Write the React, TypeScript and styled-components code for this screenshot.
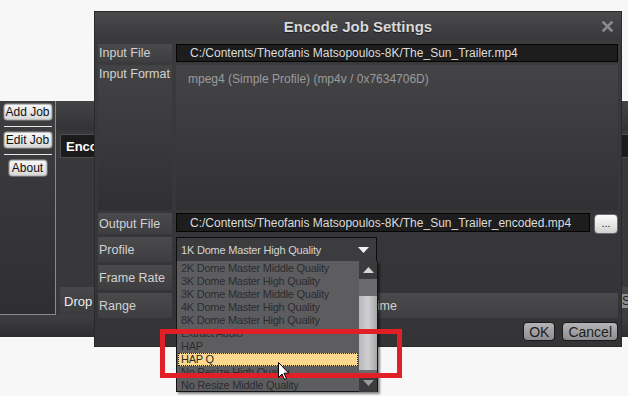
import React from 'react';
import styled, { createGlobalStyle } from 'styled-components';

const GlobalStyle = createGlobalStyle`
  html, body {
    margin: 0;
    padding: 0;
    background: #f7f7f7;
  }
  body {
    font-family: "Liberation Sans", Arial, sans-serif;
    font-size: 12px;
  }
`;

const profiles = [
  '2K Dome Master Middle Quality',
  '3K Dome Master High Quality',
  '3K Dome Master Middle Quality',
  '4K Dome Master High Quality',
  '8K Dome Master High Quality',
  'Extract Audio',
  'HAP',
  'HAP Q',
  'No Resize High Quality',
  'No Resize Middle Quality',
];

const App: React.FC = () => {
  return (
    <Stage>
      <GlobalStyle />

      <MainWindow>
        <Sidebar>
          <SideButton>Add Job</SideButton>
          <SideRule />
          <SideButton>Edit Job</SideButton>
          <SideRule />
          <SideButton $narrow>About</SideButton>
        </Sidebar>
        <Content>
          <HeaderStrip />
          <JobHeader>Encode Job</JobHeader>
          <Spacer />
          <DropRow>
            <span>Drop some files</span>
            <StartButton>S</StartButton>
          </DropRow>
        </Content>
        <BottomBar />
      </MainWindow>

      <Dialog>
        <TitleBar>
          <span />
          <Title>Encode Job Settings</Title>
          <CloseIcon viewBox='0 0 12 12'>
            <path d='M1.5 1.5 L10.5 10.5 M10.5 1.5 L1.5 10.5' />
          </CloseIcon>
        </TitleBar>

        <Form>
          <Label>Input File</Label>
          <Field>C:/Contents/Theofanis Matsopoulos-8K/The_Sun_Trailer.mp4</Field>

          <Label $tall>Input Format</Label>
          <InfoPanel>mpeg4 (Simple Profile) (mp4v / 0x7634706D)</InfoPanel>

          <Label>Output File</Label>
          <FieldRow>
            <Field>C:/Contents/Theofanis Matsopoulos-8K/The_Sun_Trailer_encoded.mp4</Field>
            <BrowseButton>...</BrowseButton>
          </FieldRow>

          <Label>Profile</Label>
          <ComboCell>
            <Combo>
              <span>1K Dome Master High Quality</span>
              <ComboArrow viewBox='0 0 11 6'>
                <path d='M0 0 H11 L5.5 6 Z' />
              </ComboArrow>
            </Combo>
            <DropList>
              <Items>
                {profiles.map((p) => (
                  <Item key={p} $active={p === 'HAP Q'}>
                    {p}
                  </Item>
                ))}
              </Items>
              <ScrollBar>
                <ScrollArrow>
                  <svg width='11' height='6' viewBox='0 0 11 6'>
                    <path d='M0 6 H11 L5.5 0 Z' fill='#d6d6d6' />
                  </svg>
                </ScrollArrow>
                <ScrollTrack>
                  <ScrollThumb />
                </ScrollTrack>
                <ScrollArrow>
                  <svg width='11' height='6' viewBox='0 0 11 6'>
                    <path d='M0 0 H11 L5.5 6 Z' fill='#9a9a9a' />
                  </svg>
                </ScrollArrow>
              </ScrollBar>
            </DropList>
          </ComboCell>

          <Label>Frame Rate</Label>
          <span />

          <Label>Range</Label>
          <RangePanel>Whole Video - Start Time to End Time</RangePanel>
        </Form>

        <Actions>
          <DialogButton>OK</DialogButton>
          <DialogButton>Cancel</DialogButton>
        </Actions>
      </Dialog>

      <Highlight />
      <Pointer viewBox='0 0 12 19'>
        <path d='M0.5 0.5 L0.5 15.5 L4 12 L6.5 17.5 L8.5 16.6 L6 11.2 L10.8 11.2 Z' />
      </Pointer>
    </Stage>
  );
};

export default App;

const Stage = styled.div`
  position: relative;
  width: 628px;
  height: 396px;
  overflow: hidden;
  background: #f7f7f7;
`;

/* background main window */

const MainWindow = styled.div`
  position: absolute;
  left: 0;
  top: 101px;
  width: 664px;
  height: 236px;
  display: grid;
  grid-template-columns: 56px 1fr;
  grid-template-rows: 1fr 22px;
  background: #38383a;
`;

const Sidebar = styled.div`
  display: flex;
  flex-direction: column;
  align-items: center;
  padding-top: 2px;
  background: linear-gradient(#3e3e41, #2f2f31);
  border-right: 1px solid #8a8a8c;
  border-bottom: 1px solid #8a8a8c;
`;

const SideButton = styled.div<{ $narrow?: boolean }>`
  box-sizing: border-box;
  width: ${({ $narrow }) => ($narrow ? '40px' : '50px')};
  height: 18px;
  display: flex;
  align-items: center;
  justify-content: center;
  font-size: 12px;
  color: #111;
  background: linear-gradient(#fafafa, #d6d6d6);
  border: 1px solid #6a6a6a;
  border-radius: 4px;
  box-shadow: inset 0 0 0 1px #bdbdbd;
`;

const SideRule = styled.div`
  width: 48px;
  height: 1px;
  margin: 5px 0 4px;
  background: #e6e6e6;
`;

const Content = styled.div`
  display: flex;
  flex-direction: column;
`;

const HeaderStrip = styled.div`
  height: 29px;
  background: linear-gradient(#444447, #333335);
`;

const JobHeader = styled.div`
  box-sizing: border-box;
  height: 24px;
  margin: 4px 0 0 4px;
  padding-left: 5px;
  display: flex;
  align-items: center;
  background: #1b1b1b;
  border: 1px solid #4e4e50;
  color: #fff;
  font-weight: bold;
  font-size: 13px;
`;

const Spacer = styled.div`
  flex: 1;
`;

const DropRow = styled.div`
  height: 28px;
  margin-left: 4px;
  padding-left: 4px;
  display: flex;
  align-items: center;
  justify-content: space-between;
  background: linear-gradient(#48484b, #3c3c3f);
  color: #eee;
  font-size: 13px;
`;

const StartButton = styled.div`
  margin-right: 30px;
  padding: 0 4px;
  height: 14px;
  line-height: 14px;
  font-size: 12px;
  color: #222;
  background: #8e8e90;
`;

const BottomBar = styled.div`
  grid-column: 1 / -1;
  background: linear-gradient(#3f3f42, #2d2d2f);
`;

/* dialog */

const Dialog = styled.div`
  position: absolute;
  left: 95px;
  top: 12px;
  width: 526px;
  height: 334px;
  display: flex;
  flex-direction: column;
  background: linear-gradient(#3b3b3d, #343436);
  box-shadow: 0 0 0 1px #2a2a2c;
`;

const TitleBar = styled.div`
  height: 28px;
  display: grid;
  grid-template-columns: 28px 1fr 28px;
  align-items: center;
  justify-items: center;
  background: linear-gradient(#4a4a4d, #38383a);
`;

const Title = styled.div`
  font-weight: bold;
  font-size: 15px;
  color: #d8d8d8;
  text-shadow: 0 1px 1px #1e1e1e;
`;

const CloseIcon = styled.svg`
  width: 13px;
  height: 13px;
  fill: none;
  stroke: #8a8a8c;
  stroke-width: 2.6;
`;

const Form = styled.div`
  display: grid;
  grid-template-columns: 74px 1fr;
  grid-template-rows: 18px 145px 21px 25px 25px 25px;
  column-gap: 4px;
  row-gap: 3px;
  padding: 4px 3px 0 3px;
`;

const Label = styled.div<{ $tall?: boolean }>`
  display: flex;
  align-items: ${({ $tall }) => ($tall ? 'flex-start' : 'center')};
  padding: ${({ $tall }) => ($tall ? '2px 0 0 1px' : '0 0 0 1px')};
  color: #d2d2d2;
  font-size: 12.5px;
  white-space: nowrap;
  overflow: hidden;
  background: ${({ $tall }) =>
    $tall ? 'linear-gradient(#434346, #303032)' : 'linear-gradient(#4a4a4d, #3e3e41)'};
`;

const Field = styled.div`
  flex: 1;
  box-sizing: border-box;
  display: flex;
  align-items: center;
  padding-left: 13px;
  background: #1d1d1e;
  border: 1px solid #050505;
  color: #dcdcdc;
  font-size: 12px;
  white-space: nowrap;
  overflow: hidden;
`;

const FieldRow = styled.div`
  display: flex;
  gap: 4px;
  padding-bottom: 2px;
`;

const BrowseButton = styled.div`
  box-sizing: border-box;
  width: 24px;
  height: 20px;
  margin-top: 1px;
  display: flex;
  align-items: flex-end;
  justify-content: center;
  padding-bottom: 4px;
  font-size: 11px;
  color: #222;
  background: linear-gradient(#fdfdfd, #d2d2d2);
  border: 1px solid #6c6c6c;
  border-radius: 4px;
`;

const InfoPanel = styled.div`
  padding: 7px 0 0 12px;
  color: #9b9b9d;
  font-size: 12px;
  background: linear-gradient(#444447, #313133);
`;

const ComboCell = styled.div`
  position: relative;
  z-index: 2;
`;

const Combo = styled.div`
  box-sizing: border-box;
  width: 201px;
  height: 25px;
  display: flex;
  align-items: center;
  justify-content: space-between;
  padding: 0 7px 0 4px;
  background: #3c3c3f;
  border: 1px solid #0c0c0c;
  color: #d4d4d4;
  font-size: 11px;
  letter-spacing: -0.2px;
`;

const ComboArrow = styled.svg`
  width: 11px;
  height: 6px;
  fill: #f2f2f2;
`;

const DropList = styled.div`
  position: absolute;
  left: 0;
  top: 24px;
  width: 202px;
  height: 131px;
  box-sizing: border-box;
  display: grid;
  grid-template-columns: 1fr 18px;
  background: #5d5d60;
  border: 1px solid #141414;
  border-top: none;
  box-shadow: 2px 2px 2px rgba(0, 0, 0, 0.45);
`;

const Items = styled.div`
  display: flex;
  flex-direction: column;
  padding: 1px 1px 0 1px;
`;

const Item = styled.div<{ $active?: boolean }>`
  box-sizing: border-box;
  height: 13px;
  line-height: 12px;
  padding-left: 3px;
  font-size: 11px;
  letter-spacing: -0.25px;
  color: #2c2c2e;
  white-space: nowrap;
  background: ${({ $active }) => ($active ? '#fcd88e' : 'transparent')};
  outline: ${({ $active }) => ($active ? '1px dotted #222' : 'none')};
  outline-offset: -1px;
`;

const ScrollBar = styled.div`
  display: grid;
  grid-template-rows: 18px 1fr 19px;
`;

const ScrollArrow = styled.div`
  display: flex;
  align-items: center;
  justify-content: center;
  background: #3b3b3d;
`;

const ScrollTrack = styled.div`
  padding-top: 17px;
  background: #6b6b6e;
`;

const ScrollThumb = styled.div`
  height: 74px;
  background: linear-gradient(90deg, #b8b8ba, #d0d0d2 50%, #a8a8aa);
`;

const RangePanel = styled.div`
  display: flex;
  align-items: center;
  padding-left: 12px;
  color: #d2d2d2;
  font-size: 12.5px;
  white-space: nowrap;
  background: linear-gradient(#4a4a4d, #3f3f42);
`;

const Actions = styled.div`
  display: flex;
  justify-content: flex-end;
  gap: 7px;
  padding: 4px 3px 0 0;
`;

const DialogButton = styled.div`
  box-sizing: border-box;
  min-width: 32px;
  height: 19px;
  padding: 0 5px;
  display: flex;
  align-items: center;
  justify-content: center;
  font-size: 14px;
  color: #1e1e1e;
  background: linear-gradient(#b4b4b6, #8e8e90);
  border: 1px solid #1a1a1a;
  border-radius: 4px;
`;

/* annotation overlay */

const Highlight = styled.div`
  position: absolute;
  left: 160px;
  top: 329px;
  width: 242px;
  height: 49px;
  box-sizing: border-box;
  border: 5px solid #e21f27;
  z-index: 5;
`;

const Pointer = styled.svg`
  position: absolute;
  left: 278px;
  top: 362px;
  width: 12px;
  height: 19px;
  fill: #fff;
  stroke: #000;
  stroke-width: 1;
  z-index: 6;
`;
